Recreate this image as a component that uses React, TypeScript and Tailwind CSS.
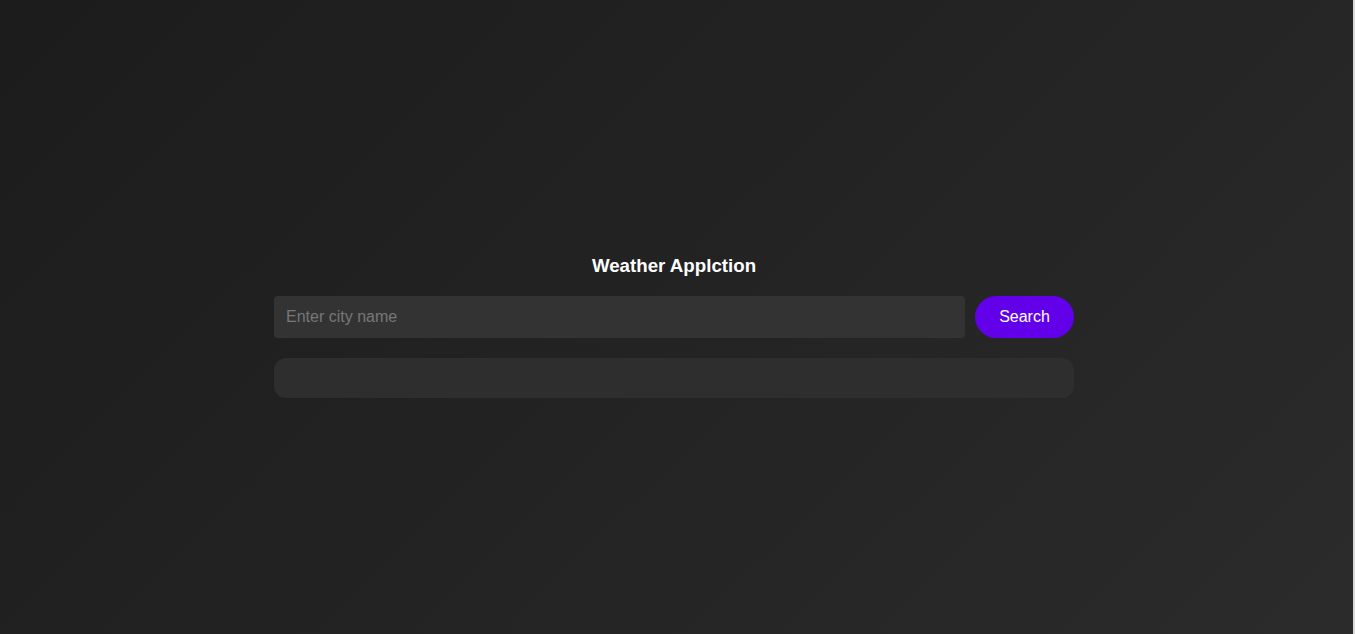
import React from "react";

export default function App() {
  return (
    <div className="flex h-[634px] w-full overflow-hidden" style={{ fontFamily: '"Liberation Sans", Arial, sans-serif' }}>
      <div className="flex-1 bg-[linear-gradient(135deg,#1c1c1c_0%,#232323_50%,#2b2b2b_100%)] pr-[5px] pt-[255px]">
        <div className="mx-auto w-[800px]">
          <h1 className="text-center text-[18.72px] font-bold leading-[21px] text-white">Weather Applction</h1>
          <div className="mt-[20px] flex gap-[10px]">
            <input
              type="text"
              placeholder="Enter city name"
              className="h-[42px] flex-1 rounded-[4px] bg-[#333333] px-[12px] text-[16px] text-white placeholder:text-[#777777] outline-none"
            />
            <button className="h-[42px] w-[99px] rounded-full bg-[#6200ea] text-[16px] text-white">Search</button>
          </div>
          <div className="mt-[20px] h-[40px] rounded-[12px] bg-[#2e2e2e]"></div>
        </div>
      </div>
      <div className="w-[2px] bg-[#d9d9d9]"></div>
    </div>
  );
}
